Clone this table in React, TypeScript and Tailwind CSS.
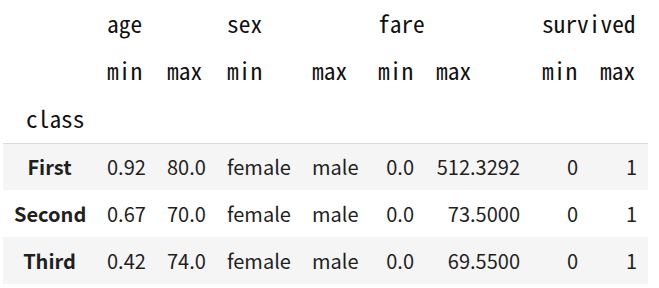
const rows = [
  { label: 'First', cells: ['0.92', '80.0', 'female', 'male', '0.0', '512.3292', '0', '1'] },
  { label: 'Second', cells: ['0.67', '70.0', 'female', 'male', '0.0', '73.5000', '0', '1'] },
  { label: 'Third', cells: ['0.42', '74.0', 'female', 'male', '0.0', '69.5500', '0', '1'] },
];

const groups = ['age', 'sex', 'fare', 'survived'];

const mono = "font-['Noto_Sans_Mono_CJK_KR','DejaVu_Sans_Mono',monospace] text-[23.4px] font-normal text-[#111]";

export default function App() {
  return (
    <div className="h-[288px] w-[659px] bg-white pl-[3px]">
      <table
        className="table-fixed border-collapse text-[20px] text-[#1f1f1f]"
        style={{ width: 645 }}
      >
        <colgroup>
          <col className="w-[93px]" />
          <col className="w-[60px]" />
          <col className="w-[60px]" />
          <col className="w-[85px]" />
          <col className="w-[66px]" />
          <col className="w-[58px]" />
          <col className="w-[106px]" />
          <col className="w-[58px]" />
          <col className="w-[59px]" />
        </colgroup>
        <thead>
          <tr className="h-[47px]">
            <th />
            {groups.map((g) => (
              <th key={g} colSpan={2} className={`px-[11px] text-left ${mono}`}>
                {g}
              </th>
            ))}
          </tr>
          <tr className="h-[48px]">
            <th />
            {groups.flatMap((g) => [
              <th key={g + 'min'} className={`px-[11px] text-left ${mono}`}>min</th>,
              <th key={g + 'max'} className={`px-[11px] text-left ${mono}`}>max</th>,
            ])}
          </tr>
          <tr className="h-[48px] border-b border-[#dcdcdc]">
            <th className={`pl-[23px] text-left ${mono}`}>class</th>
            {Array.from({ length: 8 }).map((_, i) => (
              <th key={i} />
            ))}
          </tr>
        </thead>
        <tbody className="font-['Noto_Sans_CJK_KR','Noto_Sans',sans-serif]">
          {rows.map((r, i) => (
            <tr key={r.label} className={`h-[47px] ${i % 2 === 0 ? 'bg-[#f5f5f5]' : 'bg-white'}`}>
              <th className="px-[11px] text-center font-bold text-[#1f1f1f]">{r.label}</th>
              {r.cells.map((c, j) => (
                <td key={j} className="px-[11px] text-right">
                  {c}
                </td>
              ))}
            </tr>
          ))}
        </tbody>
      </table>
    </div>
  );
}
